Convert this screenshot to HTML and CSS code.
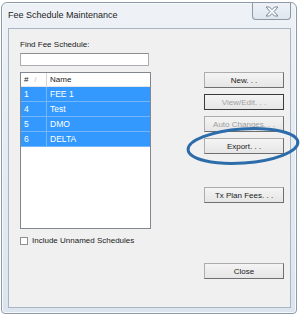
FILE: index.html
```html
<!DOCTYPE html>
<html lang="en">
<head>
    <meta charset="UTF-8">
    <title>Fee Schedule Maintenance</title>
    <link rel="stylesheet" href="styles.css">
</head>
<body>
    <div class="window">
        <div class="titlebar">
            <span class="title">Fee Schedule Maintenance</span>
            <button class="close-x" title="Close">
                <svg width="14" height="11" viewBox="0 0 14 11">
                    <path d="M1 1h3.5L7 3.6 9.5 1H13L9 5.5 13 10H9.5L7 7.4 4.5 10H1l4-4.5z" fill="#fafbfd" stroke="#7d8896" stroke-width="1"/>
                </svg>
            </button>
        </div>

        <div class="client">
            <div class="left-col">
                <label class="label" for="find">Find Fee Schedule:</label>
                <input id="find" class="find-input" type="text">

                <div class="list">
                    <div class="list-head">
                        <div class="col-num">#<span class="sort">/</span></div>
                        <div class="col-name">Name</div>
                    </div>
                    <div class="row"><div class="col-num">1</div><div class="col-name">FEE 1</div></div>
                    <div class="row"><div class="col-num">4</div><div class="col-name">Test</div></div>
                    <div class="row"><div class="col-num">5</div><div class="col-name">DMO</div></div>
                    <div class="row"><div class="col-num">6</div><div class="col-name">DELTA</div></div>
                </div>

                <label class="check-row">
                    <span class="check"></span>
                    Include Unnamed Schedules
                </label>
            </div>

            <div class="right-col">
                <button class="btn">New. . .</button>
                <button class="btn default disabled">View/Edit. . .</button>
                <button class="btn disabled">Auto Changes. . .</button>
                <button class="btn">Export. . .</button>
                <button class="btn tx">Tx Plan Fees. . .</button>
                <button class="btn close">Close</button>
            </div>
        </div>
    </div>

    <svg class="highlight" width="304" height="320" viewBox="0 0 304 320">
        <ellipse cx="243" cy="146" rx="55" ry="17" transform="rotate(-4 243 146)" fill="none" stroke="#2d6cab" stroke-width="3"/>
    </svg>
</body>
</html>
```

FILE: styles.css
```css
* {
    margin: 0;
    padding: 0;
    box-sizing: border-box;
    font-family: "Liberation Sans", Arial, sans-serif;
}

body {
    background: #fff;
    width: 304px;
    height: 320px;
    overflow: hidden;
    color: #1a1a1a;
    font-size: 8px;
}

.window {
    margin: 2px 0 0 1px;
    width: 296px;
    height: 312px;
    border: 1px solid #8e9aa8;
    border-radius: 6px 6px 4px 4px;
    padding: 0 5px 5px 6px;
    background: linear-gradient(#eef2f7, #dce5ef);
    box-shadow: inset 0 0 0 1px #f6f9fc;
}

.titlebar {
    height: 25px;
    display: flex;
    justify-content: space-between;
    align-items: flex-start;
}

.title {
    font-size: 9px;
    line-height: 25px;
    color: #1e1e1e;
}

.close-x {
    width: 39px;
    height: 17px;
    border: 1px solid #8c98a6;
    border-top: none;
    border-radius: 0 0 4px 4px;
    background: linear-gradient(#eef2f7, #dfe6ee);
    display: flex;
    justify-content: center;
    align-items: center;
}

.client {
    height: 280px;
    border: 1px solid #a9b5c3;
    background: #f0f0f0;
    display: flex;
}

.left-col {
    margin-left: 11px;
    padding-top: 11px;
    width: 131px;
    display: flex;
    flex-direction: column;
}

.label {
    line-height: 10px;
    margin-bottom: 3px;
}

.find-input {
    width: 129px;
    height: 13px;
    border: 1px solid #abadb3;
    border-top-color: #8e8f8f;
    background: #fff;
    outline: none;
}

.list {
    margin-top: 6px;
    height: 157px;
    border: 1px solid #82878f;
    background: #fff;
}

.list-head {
    height: 14px;
    display: flex;
    background: #fff;
    border-bottom: 1px solid #e5e5e5;
}

.list-head .col-num {
    border-right: 1px solid #d5d5d5;
    line-height: 13px;
}

.list-head .col-name {
    line-height: 13px;
}

.sort {
    color: #b4b4b4;
    font-size: 7px;
    margin-left: 6px;
}

.col-num {
    width: 26px;
    padding-left: 3px;
}

.col-name {
    padding-left: 3px;
}

.row {
    height: 15px;
    display: flex;
    background: #3399ff;
    color: #fff;
    border-bottom: 1px solid #74b6fb;
    line-height: 14px;
    font-size: 8.5px;
}

.row .col-num {
    border-right: 1px solid #74b6fb;
}

.check-row {
    margin-top: 8px;
    display: flex;
    align-items: center;
    gap: 4px;
    line-height: 8px;
}

.check {
    width: 8px;
    height: 8px;
    border: 1px solid #8f8f8f;
    background: #fff;
}

.right-col {
    margin-left: 53px;
    padding-top: 43px;
    width: 80px;
    display: flex;
    flex-direction: column;
    gap: 6px;
}

.btn {
    height: 16px;
    border: 1px solid #adadad;
    border-right-color: #6f6f6f;
    border-bottom-color: #6f6f6f;
    background: linear-gradient(#f4f4f4, #e6e6e6);
    font-size: 8px;
    color: #1a1a1a;
    text-align: center;
}

.btn.default {
    border-color: #3a3a3a;
}

.btn.disabled {
    color: #a0a0a0;
}

.btn.tx {
    margin-top: 27px;
}

.btn.close {
    margin-top: 54px;
}

.highlight {
    position: absolute;
    left: 0;
    top: 0;
    pointer-events: none;
}
```
